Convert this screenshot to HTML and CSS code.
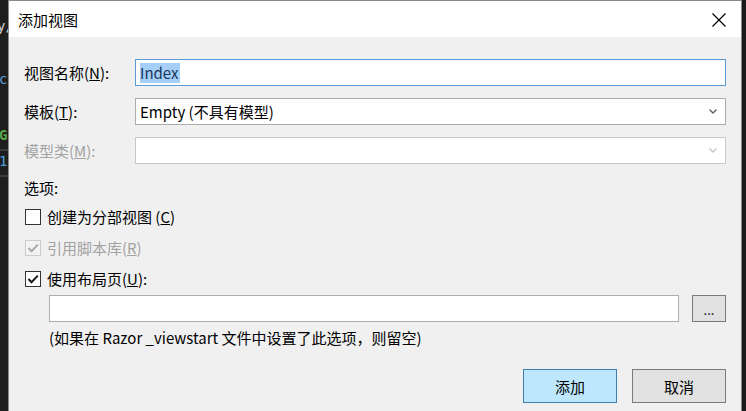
FILE: index.html
```html
<!DOCTYPE html>
<html lang="zh-CN">
<head>
<meta charset="utf-8">
<title>添加视图</title>
<link rel="stylesheet" href="styles.css">
</head>
<body>
  <div class="editor-strip">
    <span class="code c-white">y/</span>
    <span class="code c-blue c-2">c</span>
    <span class="code c-green c-3">G</span>
    <span class="code-rule"></span>
    <span class="code c-lblue c-4">1</span>
    <span class="code-rule"></span>
  </div>
  <div class="dialog">
    <div class="titlebar">
      <span class="title">添加视图</span>
      <span class="close" aria-label="关闭">
        <svg width="14" height="14" viewBox="0 0 14 14"><path d="M0.5 0.5 L13.5 13.5 M13.5 0.5 L0.5 13.5" stroke="#000" stroke-width="1.2" fill="none"/></svg>
      </span>
    </div>
    <div class="content">
      <div class="form-grid">
        <label class="lbl">视图名称(<u>N</u>):</label>
        <div class="field focused"><span class="sel">Index</span></div>

        <label class="lbl">模板(<u>T</u>):</label>
        <div class="field select">
          <span>Empty (不具有模型)</span>
          <svg class="chev" width="8" height="5" viewBox="0 0 8 5"><path d="M0.5 0.5 L4 4 L7.5 0.5" stroke="#5a5a5a" stroke-width="1.3" fill="none"/></svg>
        </div>

        <label class="lbl disabled">模型类(<u>M</u>):</label>
        <div class="field select dis">
          <span></span>
          <svg class="chev" width="8" height="5" viewBox="0 0 8 5"><path d="M0.5 0.5 L4 4 L7.5 0.5" stroke="#c4c4c4" stroke-width="1.3" fill="none"/></svg>
        </div>
      </div>

      <div class="section-label">选项:</div>
      <div class="checks">
        <div class="check-row">
          <span class="box"></span>
          <span>创建为分部视图 (<u>C</u>)</span>
        </div>
        <div class="check-row disabled">
          <span class="box dis">
            <svg width="14" height="14" viewBox="0 0 14 14"><path d="M2.5 7 L5.5 10.2 L11.8 3.6" stroke="#a9a9a9" stroke-width="2" fill="none"/></svg>
          </span>
          <span>引用脚本库(<u>R</u>)</span>
        </div>
        <div class="check-row">
          <span class="box">
            <svg width="14" height="14" viewBox="0 0 14 14"><path d="M2.5 7 L5.5 10.2 L11.8 3.6" stroke="#1a1a1a" stroke-width="2" fill="none"/></svg>
          </span>
          <span>使用布局页(<u>U</u>):</span>
        </div>
      </div>

      <div class="layout-row">
        <div class="field plain"></div>
        <button class="btn browse">...</button>
      </div>
      <div class="hint">(如果在 Razor _viewstart 文件中设置了此选项，则留空)</div>

      <div class="footer">
        <button class="btn primary">添加</button>
        <button class="btn">取消</button>
      </div>
    </div>
  </div>
  <div class="editor-strip right"></div>
</body>
</html>
```
FILE: styles.css
```css
* { box-sizing: border-box; }
html, body { margin: 0; padding: 0; }
body {
  width: 746px;
  height: 411px;
  overflow: hidden;
  background: #1b1b1b;
  display: flex;
  font-family: "Noto Sans CJK SC", sans-serif;
  font-size: 15px;
  color: #000;
}

.editor-strip {
  width: 8px;
  flex: none;
  background: #1e1e1e;
  overflow: hidden;
  display: flex;
  flex-direction: column;
  font-family: "DejaVu Sans Mono", monospace;
  font-size: 14px;
  line-height: 16px;
}
.editor-strip.right { width: 4px; background: #1b1b1b; }
.code { display: block; white-space: nowrap; margin-left: -1px; }
.c-white { color: #d4d4d4; margin-top: 18px; margin-left: -3px; }
.c-blue { color: #569cd6; margin-top: 37px; }
.c-2 { }
.c-green { color: #57a64a; margin-top: 40px; font-weight: bold; }
.code-rule { display: block; height: 2px; background: #3a3a3a; margin-top: 6px; }
.c-lblue { color: #4f9fd9; margin-top: 2px; }

.dialog {
  width: 734px;
  flex: none;
  border: 1px solid #8a8a8a;
  border-bottom: none;
  display: flex;
  flex-direction: column;
  background: #f0f0f0;
}

.titlebar {
  height: 36px;
  background: #fff;
  display: flex;
  align-items: center;
  justify-content: space-between;
  padding: 0 15px 0 9px;
}
.title { font-size: 15px; line-height: 20px; margin-top: 1px; }
.close { display: flex; width: 14px; height: 14px; margin-top: 1px; }

.content {
  flex: 1;
  padding: 22px 15px 0 15px;
}

.form-grid {
  display: grid;
  grid-template-columns: 111px 1fr;
  row-gap: 12px;
}
.lbl {
  height: 27px;
  line-height: 27px;
  white-space: nowrap;
}
.lbl.disabled, .check-row.disabled { color: #a2a2a2; }

.field {
  height: 27px;
  background: #fff;
  border: 1px solid #acacac;
  display: flex;
  align-items: center;
  padding: 0 4px;
  line-height: 20px;
}
.field.focused { border-color: #5b9bd5; }
.sel {
  background: #a6cff7;
  color: #17365d;
  padding: 0 1px 0 0;
  line-height: 20px;
}
.field.select { justify-content: space-between; padding-right: 8px; }
.field.dis { border-color: #c8c8c8; }
.chev { flex: none; }

.section-label {
  margin-top: 14px;
  line-height: 20px;
}
.checks {
  margin-top: 9px;
  display: flex;
  flex-direction: column;
  gap: 11px;
}
.check-row {
  display: flex;
  align-items: center;
  gap: 6px;
  line-height: 20px;
  padding-left: 1px;
}
.box {
  width: 16px;
  height: 16px;
  border: 1px solid #333;
  background: #fff;
  display: flex;
  align-items: center;
  justify-content: center;
  flex: none;
}
.box.dis { border-color: #cccccc; background: #f3f3f3; }

.layout-row {
  margin-top: 6px;
  padding-left: 25px;
  display: flex;
  gap: 13px;
}
.layout-row .field { flex: 1; }

.btn {
  font-family: "Noto Sans CJK SC", sans-serif;
  font-size: 15px;
  color: #000;
  background: #e1e1e1;
  border: 1px solid #7a7a7a;
  padding: 0;
  margin: 0;
}
.browse {
  width: 34px;
  height: 27px;
  line-height: 20px;
  font-size: 13px;
  padding-top: 2px;
}

.hint {
  margin-top: 6px;
  padding-left: 25px;
  line-height: 20px;
  white-space: nowrap;
}

.footer {
  margin-top: 21px;
  display: flex;
  justify-content: flex-end;
  gap: 15px;
}
.footer .btn { width: 94px; height: 34px; }
.btn.primary { background: #bee6fd; border-color: #3c7fb1; }
```
